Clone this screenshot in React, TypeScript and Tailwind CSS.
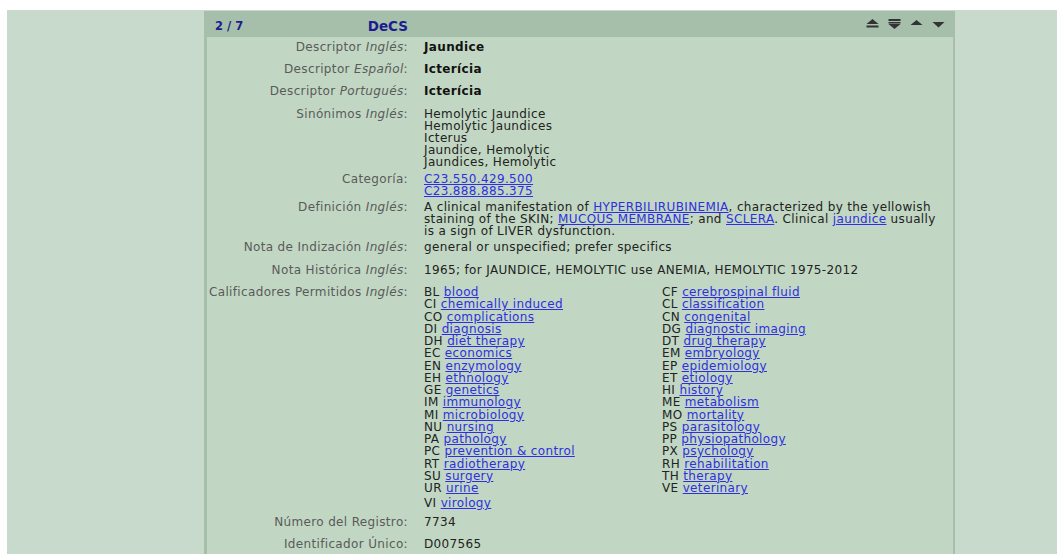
import React from 'react';

type Qualifier = [string, string];

const leftQualifiers: Qualifier[] = [
  ['BL', 'blood'],
  ['CI', 'chemically induced'],
  ['CO', 'complications'],
  ['DI', 'diagnosis'],
  ['DH', 'diet therapy'],
  ['EC', 'economics'],
  ['EN', 'enzymology'],
  ['EH', 'ethnology'],
  ['GE', 'genetics'],
  ['IM', 'immunology'],
  ['MI', 'microbiology'],
  ['NU', 'nursing'],
  ['PA', 'pathology'],
  ['PC', 'prevention & control'],
  ['RT', 'radiotherapy'],
  ['SU', 'surgery'],
  ['UR', 'urine'],
];

const rightQualifiers: Qualifier[] = [
  ['CF', 'cerebrospinal fluid'],
  ['CL', 'classification'],
  ['CN', 'congenital'],
  ['DG', 'diagnostic imaging'],
  ['DT', 'drug therapy'],
  ['EM', 'embryology'],
  ['EP', 'epidemiology'],
  ['ET', 'etiology'],
  ['HI', 'history'],
  ['ME', 'metabolism'],
  ['MO', 'mortality'],
  ['PS', 'parasitology'],
  ['PP', 'physiopathology'],
  ['PX', 'psychology'],
  ['RH', 'rehabilitation'],
  ['TH', 'therapy'],
  ['VE', 'veterinary'],
];

const synonyms = [
  'Hemolytic Jaundice',
  'Hemolytic Jaundices',
  'Icterus',
  'Jaundice, Hemolytic',
  'Jaundices, Hemolytic',
];

function Link({ children }: { children: React.ReactNode }) {
  return <a className="text-[#2f2fe0] underline cursor-pointer">{children}</a>;
}

function Label({ text, lang }: { text: string; lang?: string }) {
  return (
    <div className="w-[201px] shrink-0 text-right text-[#5a5a5a]">
      {text}
      {lang && (
        <>
          {' '}
          <i>{lang}</i>
        </>
      )}
      :
    </div>
  );
}

function Row({
  label,
  lang,
  className,
  children,
}: {
  label: string;
  lang?: string;
  className: string;
  children: React.ReactNode;
}) {
  return (
    <div className={`flex ${className}`}>
      <Label text={label} lang={lang} />
      <div className="pl-[16px] pr-[4px] flex-1 text-[#222]">{children}</div>
    </div>
  );
}

function NavIcons() {
  return (
    <div className="flex items-center gap-[9px] pr-[8px] text-[#333]">
      {/* first */}
      <svg width="13" height="10" viewBox="0 0 13 10" fill="currentColor">
        <path d="M6.5 0 L12.5 5 L0.5 5 Z" />
        <rect x="0.5" y="6.5" width="12" height="2" />
      </svg>
      {/* last */}
      <svg width="13" height="10" viewBox="0 0 13 10" fill="currentColor">
        <rect x="0.5" y="0" width="12" height="2" />
        <rect x="0.5" y="3" width="12" height="1.5" />
        <path d="M0.5 5 L12.5 5 L6.5 10 Z" />
      </svg>
      {/* previous */}
      <svg width="13" height="10" viewBox="0 0 13 10" fill="currentColor">
        <path d="M6.5 1 L12.5 6 L0.5 6 Z" />
      </svg>
      {/* next */}
      <svg width="13" height="10" viewBox="0 0 13 10" fill="currentColor">
        <path d="M0.5 3 L12.5 3 L6.5 8.5 Z" />
      </svg>
    </div>
  );
}

export default function App() {
  return (
    <div className="min-h-screen bg-white pt-[10px] pl-[7px]">
      <div
        className="bg-[#c8dacc] min-h-[544px] pt-[1px] text-[12px] leading-[12px] tracking-[0.35px]"
        style={{ fontFamily: '"DejaVu Sans", Verdana, sans-serif' }}
      >
        <div className="ml-[197px] w-[751px] bg-[#a6bfab] pl-[3px] pr-[2px]">
          {/* title bar */}
          <div className="h-[26px] flex items-center tracking-normal">
            <div className="w-[201px] flex items-center justify-between pl-[8px] pt-[3px]">
              <span className="font-bold text-[#1c1c8e] text-[11.5px]">2 / 7</span>
              <span className="font-bold text-[#1c1c8e] text-[13.5px]">DeCS</span>
            </div>
            <div className="flex-1" />
            <NavIcons />
          </div>

          {/* record body */}
          <div className="bg-[#c1d7c3] pt-[4px] pb-[6px] min-h-[520px]">
            <Row label="Descriptor" lang="Inglés" className="">
              <b className="text-[#111]">Jaundice</b>
            </Row>
            <Row label="Descriptor" lang="Español" className="mt-[10px]">
              <b className="text-[#111]">Icterícia</b>
            </Row>
            <Row label="Descriptor" lang="Portugués" className="mt-[10px]">
              <b className="text-[#111]">Icterícia</b>
            </Row>
            <Row label="Sinónimos" lang="Inglés" className="mt-[11px]">
              {synonyms.map((s) => (
                <div key={s}>{s}</div>
              ))}
            </Row>
            <Row label="Categoría" className="mt-[5px]">
              <div>
                <Link>C23.550.429.500</Link>
              </div>
              <div>
                <Link>C23.888.885.375</Link>
              </div>
            </Row>
            <Row label="Definición" lang="Inglés" className="mt-[4px]">
              A clinical manifestation of <Link>HYPERBILIRUBINEMIA</Link>, characterized by the yellowish
              <br />
              staining of the SKIN; <Link>MUCOUS MEMBRANE</Link>; and <Link>SCLERA</Link>. Clinical{' '}
              <Link>jaundice</Link> usually
              <br />
              is a sign of LIVER dysfunction.
            </Row>
            <Row label="Nota de Indización" lang="Inglés" className="mt-[4px]">
              general or unspecified; prefer specifics
            </Row>
            <Row label="Nota Histórica" lang="Inglés" className="mt-[11px]">
              1965; for JAUNDICE, HEMOLYTIC use ANEMIA, HEMOLYTIC 1975-2012
            </Row>
            <Row label="Calificadores Permitidos" lang="Inglés" className="mt-[10px]">
              <div className="grid grid-cols-[238px_1fr] leading-[12.25px]">
                {leftQualifiers.map((q, i) => (
                  <React.Fragment key={q[0]}>
                    <div className="whitespace-nowrap">
                      {q[0]} <Link>{q[1]}</Link>
                    </div>
                    <div className="whitespace-nowrap">
                      {rightQualifiers[i][0]} <Link>{rightQualifiers[i][1]}</Link>
                    </div>
                  </React.Fragment>
                ))}
              </div>
              <div className="mt-[3px]">
                VI <Link>virology</Link>
              </div>
            </Row>
            <Row label="Número del Registro" className="mt-[7px]">
              7734
            </Row>
            <Row label="Identificador Único" className="mt-[10px]">
              D007565
            </Row>
          </div>
        </div>
      </div>
    </div>
  );
}
